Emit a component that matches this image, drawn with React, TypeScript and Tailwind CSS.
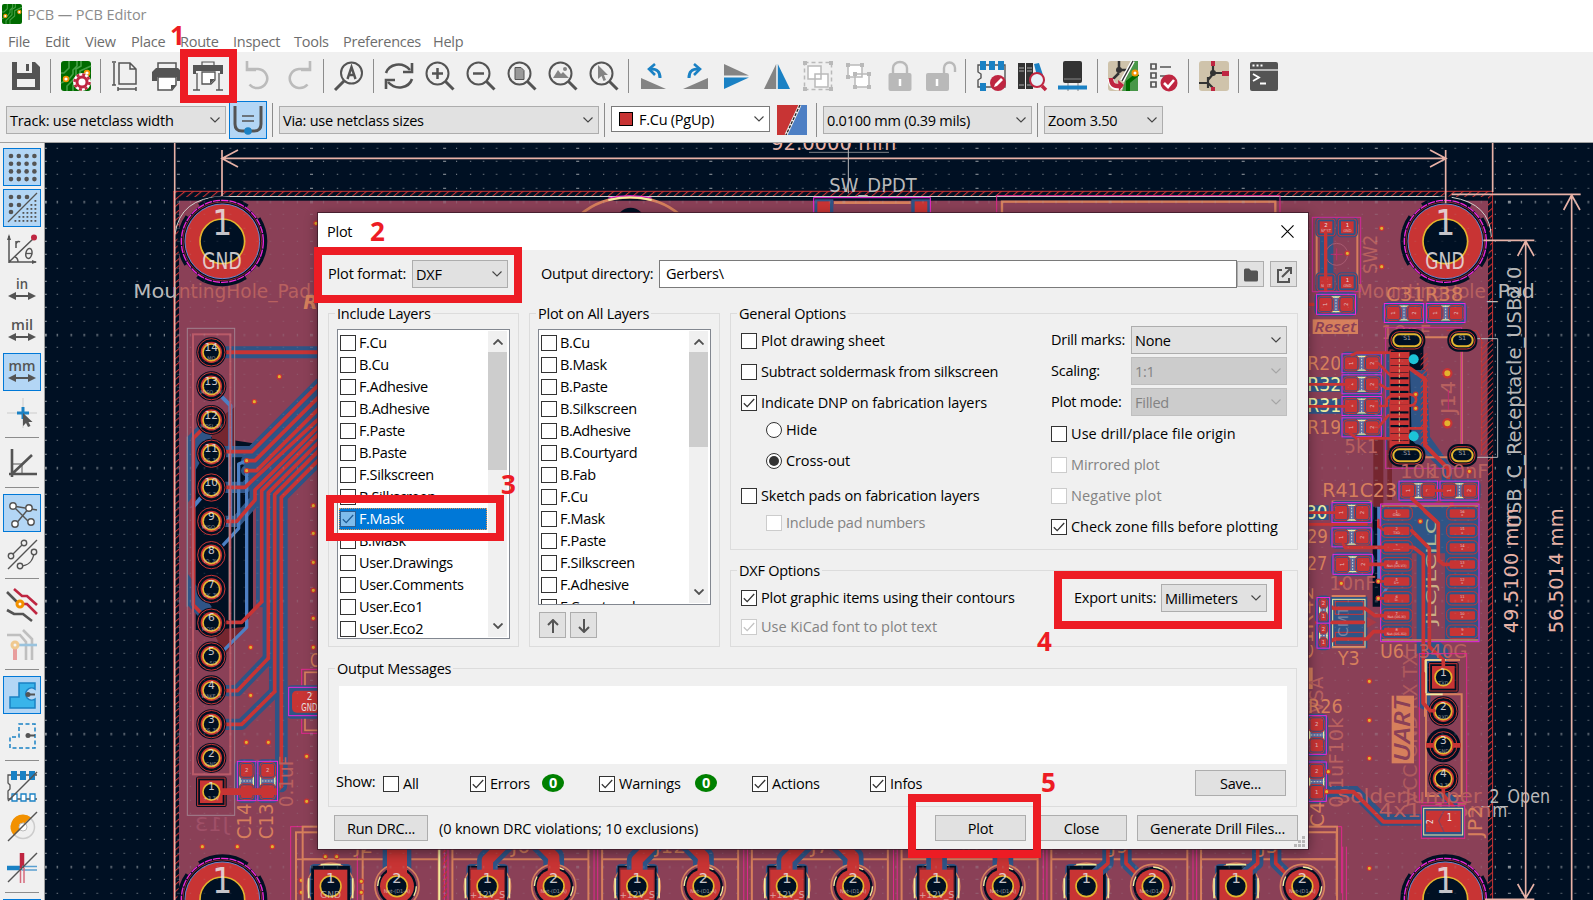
import React from "react";

type P = { children?: React.ReactNode };
const G = "#545454";

/* ---------- toolbar icons, drawn on a 30x30 grid ---------- */
function Ico({ children, className = "h-[30px] w-[30px]" }: P & { className?: string }) {
  return (
    <svg viewBox="0 0 30 30" className={`overflow-visible ${className}`} fill="none" stroke={G} strokeWidth="2">
      {children}
    </svg>
  );
}
const BoardTile = () => (
  <g stroke="none">
    <rect width="30" height="30" rx="3" fill="#006b00" />
    <g stroke="#45a045" strokeWidth="1.600" fill="none">
      <path d="M0 12h3l5-5V0M0 22l8-4 4-5V9l4-4V0M6 30v-5l9-9V8l5-3V0M12 30v-6l7-6 0-8 11-5" />
    </g>
    <circle cx="5" cy="18" r="2.400" fill="#fff" stroke="#f29100" strokeWidth="1.600" />
    <circle cx="26" cy="12" r="2.400" fill="#fff" stroke="#f29100" strokeWidth="1.600" />
  </g>
);
const Lens = ({ children }: P) => (
  <Ico>
    <circle cx="12.500" cy="12.500" r="11" strokeWidth="2" />
    <path d="M20.500 20.500L28.500 28.500" strokeWidth="3" />
    {children}
  </Ico>
);
const SaveI = () => (
  <Ico>
    <path d="M1 1h23l5 5v23H1z" fill={G} stroke="none" />
    <path d="M6 1h15v11H6zM6 18h18v8H6z" fill="#f0f0f0" stroke="none" />
    <path d="M15 3h3v7h-3z" fill={G} stroke="none" />
  </Ico>
);
const SetupI = () => (
  <Ico>
    <BoardTile />
    <g stroke="#fff" strokeWidth="8"><circle cx="21" cy="21" r="5" /></g>
    <g stroke="#bf2641"><circle cx="21" cy="21" r="5" fill="#fff" strokeWidth="3" /><circle cx="21" cy="21" r="7.500" strokeWidth="2.500" strokeDasharray="3 2.890" /></g>
  </Ico>
);
const PageI = () => (
  <Ico>
    <path d="M8 2h11l6 6v15H8zM19 2v6h6M1 1h4M1 24h4M3 2v22M7 26v4M25 26v4M7 28h18" strokeWidth="1.500" />
  </Ico>
);
const PrintI = () => (
  <Ico>
    <path d="M6 8V2h18v6" strokeWidth="1.500" />
    <path d="M4 7h22l4 4v9h-5v-4H5v4H0v-9z" fill={G} stroke="none" />
    <path d="M6 16h18v8l-4 5H6z" fill="#fff" strokeWidth="1.500" /><path d="M19 29v-5h5z" fill={G} stroke="none" />
  </Ico>
);
const PlotI = () => (
  <Ico>
    <path d="M9 5V1h12v4" strokeWidth="1.200" />
    <path d="M0 4h30v9h-3v-3H3v3H0z" fill={G} stroke="none" />
    <path d="M4 12v17M26 12v17M0 29h7M23 29h7" strokeWidth="1.300" />
    <path d="M9 11h13v8l-4 4H9z" fill="#fff" strokeWidth="1.300" /><path d="M17 23v-5h5z" fill={G} stroke="none" />
  </Ico>
);
const UndoI = ({ flip = false }: { flip?: boolean }) => (
  <Ico>
    <g transform={flip ? "translate(30 0) scale(-1 1)" : undefined} stroke="#bbb">
      <path d="M5 8h10a10 9.500 0 1 1-8.500 15.500" strokeWidth="2.600" />
      <path d="M4 0v9h9" strokeWidth="2.600" />
    </g>
  </Ico>
);
const FindI = () => (
  <Ico>
    <g transform="translate(30 0) scale(-1 1)">
      <circle cx="12.500" cy="12" r="10.500" />
      <path d="M20 20l9 9" strokeWidth="3" />
    </g>
    <path d="M13.500 18l4-12 4 12M15 14h5" strokeWidth="2.400" />
  </Ico>
);
const RefreshI = () => (
  <Ico>
    <path d="M2 12C5 3 18 0 26 9M28 18C25 27 12 30 4 21" strokeWidth="2.600" />
    <path d="M28 2v9h-9M2 28v-9h9" strokeWidth="2.600" />
  </Ico>
);
const RotI = ({ flip = false }: { flip?: boolean }) => (
  <Ico>
    <g transform={flip ? "translate(30 0) scale(-1 1)" : undefined} stroke="none">
      <path d="M2 17l25 11H2z" fill="#848484" />
      <path d="M21 17C21 10 18 8 12 8" stroke="#1a81c4" strokeWidth="3" />
      <path d="M16 3l-6 5 6 6" stroke="#1a81c4" strokeWidth="2.600" />
    </g>
  </Ico>
);
const FlipV = () => (
  <Ico><path d="M3 3v11.500h25z" fill="#848484" stroke="none" /><path d="M3 28V16.500h25z" fill="#1a81c4" stroke="none" /></Ico>
);
const FlipH = () => (
  <Ico><path d="M2 28h12.200V3z" fill="#848484" stroke="none" /><path d="M28 28H15.800V3z" fill="#1a81c4" stroke="none" /></Ico>
);
const GroupI = () => (
  <Ico>
    <g stroke="#b9b9b9" fill="#fff" strokeWidth="1.500">
      <rect x="1.500" y="1.500" width="27" height="27" strokeDasharray="4 3" fill="none" />
      <path d="M5 5h13v13H5zM12 13h13v13H12z" />
      <path d="M0 0h4v4H0zM26 0h4v4h-4zM0 26h4v4H0zM26 26h4v4h-4z" fill="#b9b9b9" stroke="none" />
    </g>
  </Ico>
);
const UngroupI = () => (
  <Ico>
    <g stroke="#b9b9b9" fill="#fff" strokeWidth="1.500">
      <path d="M4 4h14v12H4zM11 13h14v13H11z" />
      <path d="M2 2h4v4H2zM16 2h4v4h-4zM2 14h4v4H2zM9 11h4v4H9zM23 11h4v4h-4zM9 24h4v4H9zM23 24h4v4h-4z" fill="#b9b9b9" stroke="none" />
    </g>
  </Ico>
);
const LockI = ({ open = false }: { open?: boolean }) => (
  <Ico>
    <path d={open ? "M18 14V7a5.500 5.500 0 0 1 11 0v4" : "M8 14V7a7 6 0 0 1 14 0v7"} stroke="#b9b9b9" strokeWidth="2.400" />
    <rect x={open ? 0 : 3.500} y="12" width="23" height="18" rx="2" fill="#b9b9b9" stroke="none" />
    <path d={open ? "M11 18v7" : "M15 18v7"} stroke="#fff" strokeWidth="2.500" />
  </Ico>
);
const FootEditI = () => (
  <Ico>
    <path d="M2 4h27v22H2V19l3-2v-4l-3-2z" strokeWidth="1.400" />
    <path d="M4 0h6v9H4zM13 0h6v9h-6zM22 0h6v9h-6zM4 22h6v8H4z" fill="#1a81c4" stroke="none" />
    <circle cx="22" cy="22" r="8" fill="#bf2641" stroke="none" />
    <path d="M18 26l1-3 6-6 2 2-6 6z" fill="#fff" stroke="none" />
  </Ico>
);
const LibI = () => (
  <Ico>
    <path d="M1 2h7v26H1zM9 2h7v26H9z" fill="#333" stroke="none" />
    <path d="M2 7h5M10 7h5M2 10h5M10 10h5M2 24h5M10 24h5" stroke="#aaa" strokeWidth="1" />
    <path d="M17 3l5-1 6 18-6 3z" fill="#1a81c4" stroke="none" />
    <circle cx="20" cy="19" r="7" fill="#e6f1f8" stroke="#bf2641" strokeWidth="2" />
    <path d="M25 25l4 4" stroke="#bf2641" strokeWidth="3.500" />
  </Ico>
);
const ChipI = () => (
  <Ico>
    <path d="M10 18v12M20 18v12" stroke="#aaa" strokeWidth="1.500" />
    <rect x="5" y="0" width="19" height="22" rx="2" fill="#333" stroke="none" />
    <path d="M6 18h17" stroke="#888" strokeWidth="1" />
    <path d="M0 26.500h29" stroke="#1a81c4" strokeWidth="4" />
  </Ico>
);
const SyncI = () => (
  <Ico>
    <rect width="30" height="30" rx="3" fill="#cfc3ab" stroke="none" />
    <path d="M23 0h7v30H14z" fill="#489648" stroke="none" />
    <path d="M20 30v-9l10-8" stroke="#006b00" strokeWidth="4" />
    <path d="M11 0v9M11 9h8M11 12l-6 6v6" stroke="#333" strokeWidth="2.500" />
    <circle cx="11" cy="9" r="3" fill="#333" stroke="none" />
    <path d="M25 0L14 20" stroke="#fff" strokeWidth="4" /><path d="M25 0L14 20" stroke="#333" strokeWidth="1.400" />
    <circle cx="27" cy="12" r="2.500" fill="#fff" stroke="#f29100" />
    <path d="M3 18c0 8 6 9 10 7" stroke="#fff" strokeWidth="6.500" /><path d="M3 17c0 8 5 9 10 7.500" stroke="#bf2641" strokeWidth="4.500" /><path d="M10 19l6 5-5 6z" fill="#bf2641" stroke="none" />
  </Ico>
);
const DrcI = () => (
  <Ico>
    <path d="M2 3h5v5H2zM2 12h5v5H2zM2 21h5v5H2zM11 6h11M11 15h6" strokeWidth="1.700" />
    <circle cx="20" cy="22" r="8.500" fill="#bf2641" stroke="none" />
    <path d="M15 22l4 4 6-7" stroke="#fff" strokeWidth="2.600" />
  </Ico>
);
const SchI = () => (
  <Ico>
    <rect width="30" height="30" rx="3" fill="#cfc3ab" stroke="none" />
    <path d="M0 22h9M9 16v11M14 5v8l-5 6M9 22l5 5M14 12h9" stroke="#333" strokeWidth="2.200" />
    <circle cx="14" cy="12" r="3" fill="#333" stroke="none" />
    <path d="M12 0h4v5h-4zM23 10h7v5h-7zM12 26h4v4h-4z" fill="#bf2641" stroke="none" />
  </Ico>
);
const TermI = () => (
  <Ico>
    <rect x="1" y="1" width="28" height="29" rx="2" fill={G} stroke="none" />
    <path d="M1 9h28" stroke="#f0f0f0" strokeWidth="1.300" />
    <path d="M3.500 4.500h2M7.500 4.500h2M11.500 4.500h2" stroke="#fff" strokeWidth="2" />
    <path d="M4 13l6 3.500L4 20M11 22.500h6" stroke="#fff" strokeWidth="1.800" />
  </Ico>
);
const PlusI = () => <Lens><path d="M7 12.500h11M12.500 7v11" strokeWidth="2.500" /></Lens>;
const MinusI = () => <Lens><path d="M7 12.500h11" strokeWidth="2.500" /></Lens>;
const FitI = () => <Lens><path d="M8 6.500h6l3 3v9H8z" fill="#999" stroke={G} strokeWidth="1" /></Lens>;
const ImgI = () => <Lens><path d="M5 17l5-8 3 4 2-2 6 6z" fill="#848484" stroke="none" /><circle cx="17" cy="8" r="2" fill="#848484" stroke="none" /></Lens>;
const SelI = () => <Lens><path d="M9 4v14l3.500-3 2 5 2.500-1-2-5h4z" fill="#848484" stroke="none" /></Lens>;

const TOP: (React.FC | null)[] = [
  SaveI, null, SetupI, null, PageI, PrintI, PlotI, null, () => <UndoI />, () => <UndoI flip />, null, FindI, null,
  RefreshI, PlusI, MinusI, FitI, ImgI, SelI, null, () => <RotI />, () => <RotI flip />, FlipV, FlipH, GroupI, UngroupI,
  () => <LockI />, () => <LockI open />, null, FootEditI, LibI, ChipI, null, SyncI, DrcI, null, SchI, null, TermI,
];

/* ---------- left toolbar icons ---------- */
const range = (n: number) => Array.from({ length: n }, (_, i) => i);
const DotsI = () => (
  <Ico>{range(4).flatMap((r) => range(4).map((c) => <circle key={`${r}${c}`} cx={4 + c * 7.800} cy={4 + r * 7.700} r="2.300" fill={G} stroke="none" />))}</Ico>
);
const DotsHalfI = () => (
  <Ico>
    <g fill={G} stroke="none">
      {[[4, 4], [12, 4], [20, 4], [4, 12], [12, 12], [4, 19]].map(([x, y]) => <circle key={`${x}-${y}`} cx={x} cy={y} r="2.300" />)}
      {range(6).flatMap((r) => range(r + 1).map((c) => <rect key={`${r}_${c}`} x={27.500 - c * 4} y={7 + r * 4} width="1.800" height="1.800" />))}
    </g>
    <path d="M1 29L30 0" strokeWidth="1.200" />
  </Ico>
);
const PolarI = () => (
  <Ico>
    <path d="M2 29V2M2 28h27M2 28L27 4" strokeWidth="1.500" /><path d="M0 6l2-6 2 6M25 26l5 2-5 2" fill={G} stroke="none" />
    <circle cx="27" cy="3.500" r="3" fill="#bf2641" stroke="none" />
    <path d="M9 14V7M9 10c1-3 3-3 4-2M8 23c3 1 3 3 3 5" strokeWidth="1.500" />
    <ellipse cx="22" cy="19.500" rx="3" ry="5" transform="rotate(12 22 19)" strokeWidth="1.500" /><path d="M19 19.500h6" strokeWidth="1.300" />
  </Ico>
);
const UnitI = ({ t, w }: { t: string; w: number }) => (
  <Ico>
    <text x="15" y="14" textAnchor="middle" textLength={w} lengthAdjust="spacingAndGlyphs" fill={G} stroke="none" className="[font-family:'Open_Sans',sans-serif] text-[15px] font-semibold tracking-normal">{t}</text>
    <path d="M5 21h20" strokeWidth="2" /><path d="M1 21l8-4v8zM29 21l-8-4v8z" fill={G} stroke="none" />
  </Ico>
);
const CursI = () => (
  <Ico><path d="M16 0v30M0 15h30" stroke="#ccc" strokeWidth="1" /><path d="M16 9v12M10 15h12" stroke="#1a81c4" strokeWidth="3" /><path d="M16 15v13l3-3 2 4 2.500-1-2-4h4z" fill={G} stroke="none" /></Ico>
);
const AngI = () => <Ico><path d="M5 1v28M2 26h28M5 26L25 7" strokeWidth="2.600" /><path d="M5 16h10v10" strokeWidth="1" /></Ico>;
const RatsI = () => (
  <Ico><path d="M6 8l24 4M6 8l18 18M8 27L22 10" strokeWidth="1.400" />{[[6, 8], [22, 10], [8, 26], [24, 24]].map(([x, y]) => <circle key={x} cx={x} cy={y} r="3.200" fill="#fff" strokeWidth="1.400" />)}</Ico>
);
const CurvI = () => (
  <Ico><path d="M1 30L30 1M4 17L17 4M13 27c8 0 13-5 14-13" strokeWidth="1.400" />{[[17, 4], [4, 17], [27, 13], [13, 27]].map(([x, y]) => <circle key={x} cx={x} cy={y} r="2.700" fill="#f0f0f0" strokeWidth="1.400" />)}</Ico>
);
const NetI = () => (
  <Ico><g strokeWidth="2.600"><path d="M0 3l12 12M0 21l7 4h9l9 7" /><path d="M7 0l8 7h5l10 9M14 15h6l10 10" stroke="#bf2641" /></g><circle cx="13" cy="15" r="3" fill="#fff" stroke="#f29100" strokeWidth="3" /></Ico>
);
const NetDimI = () => (
  <Ico><g strokeWidth="2.600" opacity=".4"><path d="M0 5h13l6 7v18M16 0l9 9v21" stroke="#777" /><path d="M12 15h18" stroke="#1a81c4" /><path d="M8 16v14" stroke="#d22" strokeWidth="4" /><circle cx="8" cy="15" r="3" fill="#fff" stroke="#f29100" strokeWidth="3" /></g></Ico>
);
const ZoneI = () => (
  <Ico><path d="M12 3h16v6a6 6 0 1 0 0 10v9H3V17h9z" fill="#39b4ea" stroke="#1a81c4" strokeWidth="1.500" /><path d="M20 14.500h8" strokeWidth="2" /><circle cx="21" cy="14.500" r="2.500" fill={G} stroke="none" /></Ico>
);
const ZoneOI = () => (
  <Ico><path d="M12 3h16v24H3V16h9z" stroke="#1a81c4" strokeWidth="1.500" strokeDasharray="4 2.500" /><path d="M20 14.500h8" strokeWidth="2" /><circle cx="21" cy="14.500" r="2.500" fill={G} stroke="none" /></Ico>
);
const FpI = () => (
  <Ico><path d="M30 4H1v8l2 2v4l-2 2v8h29" strokeWidth="1.300" /><path d="M4 0h6v9H4zM13 0h6v9h-6zM22 0h6v9h-6z" fill="#1a81c4" stroke="none" /><path d="M5 23h5v7H5zM14 23h5v7h-5zM23 23h5v7h-5z" stroke="#1a81c4" fill="#fff" strokeWidth="1.300" /><path d="M1 30L30 1" strokeWidth="1.400" /></Ico>
);
const ViaI = () => (
  <Ico><circle cx="16" cy="15" r="11.500" stroke="#ccc" strokeWidth="1.500" /><path d="M16 2.500a12.500 12.500 0 0 0-9 21L13 18a4.500 4.500 0 0 1 5-7l6-5.500A12.500 12.500 0 0 0 16 2.500z" fill="#f29100" stroke="none" /><circle cx="16" cy="15" r="4" fill="#fff" stroke="#bbb" strokeWidth="1" /><path d="M1 29L30 0" strokeWidth="1.400" /></Ico>
);
const TrkI = () => (
  <Ico><path d="M0 15h15" stroke="#1a81c4" strokeWidth="4.500" /><path d="M15 0v15" stroke="#bf2641" strokeWidth="4.500" /><path d="M15 13.500h15M15 17h15" stroke="#5a9fd0" strokeWidth="1.500" /><path d="M13.500 15v15M17 15v15" stroke="#d56a7c" strokeWidth="1.500" /><path d="M1 29L30 0" strokeWidth="1.400" /></Ico>
);
const LEFT: ([React.FC, boolean] | null)[] = [
  [DotsI, true], [DotsHalfI, true], [PolarI, false], [() => <UnitI t="in" w={12} />, false], [() => <UnitI t="mil" w={22} />, false],
  [() => <UnitI t="mm" w={27} />, true], [CursI, false], null, [AngI, false], null, [RatsI, true], [CurvI, false], null,
  [NetI, false], [NetDimI, false], null, [ZoneI, true], [ZoneOI, false], null, [FpI, false], [ViaI, false], [TrkI, false], null, [DotsI, true],
];

/* ---------- board drawing ---------- */
const BG = "#001023", ZN = "#8a4057", RD = "#c83434", BL = "#2f5486", B2 = "#4d7fc4", MG = "#f026d8", OR = "#d67f5c", DM = "#e8b2a7", YL = "#e3b42e", PY = "#f0eda0", FT = "#b8605f", WH = "#e8e4e6";

function Tx({ x, y, w, s = 60, c = OR, r = 0, a = 1, m = false, children }: { x: number; y: number; w: number; s?: number; c?: string; r?: number; a?: number; m?: boolean; children: string }) {
  return (
    <text transform={`translate(${x} ${y}) rotate(${r})${m ? " scale(-1 1)" : ""}`} textLength={w} lengthAdjust="spacingAndGlyphs" fontSize={s} fill={c} opacity={a}>
      {children}
    </text>
  );
}
const Ln = ({ d, c = RD, w = 10 }: { d: string; c?: string; w?: number }) => <path d={d} stroke={c} strokeWidth={w} fill="none" strokeLinejoin="round" strokeLinecap="round" />;
const Box = ({ x, y, w, h, c = MG, s = 3 }: { x: number; y: number; w: number; h: number; c?: string; s?: number }) => <rect x={x} y={y} width={w} height={h} stroke={c} strokeWidth={s} fill="none" />;
const Via = ({ x, y, b = 1 }: { x: number; y: number; b?: number }) => <circle cx={x} cy={y} r={6.500 * b} fill={YL} stroke={RD} strokeWidth={3.500 * b} />;
function Pin({ x, y, n, t = "", sq = false }: { x: number; y: number; n: string; t?: string; sq?: boolean }) {
  return (
    <g>
      {sq ? (
        <>
          <rect x={x - 46} y={y - 46} width="92" height="92" rx="8" fill={BG} />
          <rect x={x - 41} y={y - 41} width="82" height="82" fill="none" stroke={RD} strokeWidth="3" />
          <rect x={x - 34} y={y - 34} width="68" height="68" fill={RD} />
        </>
      ) : (
        <>
          <circle cx={x} cy={y} r="45" fill={BG} />
          <circle cx={x} cy={y} r="41" fill="none" stroke={RD} strokeWidth="3" />
          <circle cx={x} cy={y} r="32" fill={RD} />
        </>
      )}
      <circle cx={x} cy={y} r="25" fill={BG} stroke={YL} strokeWidth="5" />
      <text x={x} y={y - 4} textAnchor="middle" fontSize="32" fill={WH} opacity=".85">{n}</text>
      <text x={x} y={y + 24} textAnchor="middle" fontSize="15" fill={WH} opacity=".55">{t}</text>
    </g>
  );
}
function Hole({ x, y }: { x: number; y: number }) {
  return (
    <g>
      <circle cx={x} cy={y} r="130" fill="none" stroke={BG} strokeWidth="10" strokeDasharray="155 49.200" strokeDashoffset="75" />
      <circle cx={x} cy={y} r="126" fill={BG} />
      <circle cx={x} cy={y} r="123" fill="none" stroke={MG} strokeWidth="4" strokeDasharray="22 3" />
      <circle cx={x} cy={y} r="118" fill="none" stroke={RD} strokeWidth="2" />
      <circle cx={x} cy={y} r="112" fill={RD} stroke="#6b86cc" strokeWidth="3" />
      <circle cx={x} cy={y} r="67" fill={BG} stroke={YL} strokeWidth="5" />
      <Tx x={x - 30} y={y - 20} w={60} s={104} c={WH} a={0.85}>1</Tx>
      {y < 2000 && <Tx x={x - 60} y={y + 84} w={118} s={68} c={WH} a={0.85}>GND</Tx>}
    </g>
  );
}
/* two-pad chip part; v draws it upright */
function Chip({ x, y, w = 118, h = 57, v = false, a = "1", b = "2" }: { x: number; y: number; w?: number; h?: number; v?: boolean; a?: string; b?: string }) {
  const L = v ? h : w, S = v ? w : h;
  return (
    <g transform={`translate(${x} ${y})${v ? " rotate(90)" : ""}`}>
      <rect x={-L / 2 - 6} y={-S / 2 - 6} width={L + 12} height={S + 12} rx="18" fill={BL} />
      <rect x="-8" y={-S / 2 + 8} width="16" height={S - 16} fill="#5b6ba0" />
      <path d={`M-14 ${-S / 2 + 8}h28M-14 ${S / 2 - 8}h28`} stroke={PY} strokeWidth="4" />
      <path d={`M0 ${-S / 2 + 6}v${S - 12}`} stroke="#dcdcc8" strokeWidth="3" strokeDasharray="5 4" />
      {[-1, 1].map((k) => (
        <g key={k}>
          <rect x={k * L * 0.27 - L * 0.2} y={-S / 2 + 6} width={L * 0.4} height={S - 12} rx="12" fill={BL} stroke={RD} strokeWidth="3" />
          <rect x={k * L * 0.27 - L * 0.16} y={-S / 2 + 10} width={L * 0.32} height={S - 20} rx="6" fill={RD} />
        </g>
      ))}
      <text x={-L * 0.27} y="5" textAnchor="middle" fontSize="16" fill={WH} opacity=".75" transform={`rotate(-90 ${-L * 0.27} 0)`}>{v ? b : a}</text>
      <text x={L * 0.27} y="5" textAnchor="middle" fontSize="16" fill={WH} opacity=".75" transform={`rotate(-90 ${L * 0.27} 0)`}>{v ? a : b}</text>
      <Box x={-L / 2} y={-S / 2} w={L} h={S} />
    </g>
  );
}
const Slot = ({ x, y, w }: { x: number; y: number; w: number }) => (
  <g>
    <rect x={x - w / 2 - 14} y={y - 34} width={w + 28} height="68" rx="32" fill={BG} />
    <rect x={x - w / 2 - 7} y={y - 26} width={w + 14} height="52" rx="25" fill="none" stroke={RD} strokeWidth="3" />
    <rect x={x - w / 2} y={y - 18} width={w} height="36" rx="18" fill={BG} stroke={YL} strokeWidth="6" />
    <text x={x} y={y - 1} textAnchor="middle" fontSize="18" fill={WH} opacity=".7">S1</text>
  </g>
);

const pinNames = ["MO", "MISO_3V", "MOSI_3V", "CS_3V", "CK_3V", "MISO_5", "IO_3V", "CK_3V", "MOSI_3", "+5/3", "WAKE_5", "CS_3V", "GND", "+3.3V"];

function LeftBoard() {
  const diag = [
    "M665 935H755L960 730", "M740 962H765L960 767", "M740 992H770L960 802", "M665 1042H735L960 833",
    "M660 1144H710L765 1080V1050L960 855", "M785 1385V1052L960 877", "M805 1555V1058L960 903", "M824 1655V1064L960 928", "M844 1940V1072L960 956",
  ];
  return (
    <g transform="translate(0 140) scale(.33333)">
      <path d="M587 910l47-20 125 20v500l-30 60H587z" fill={BG} />
      <path d="M636 850l70-50v120h-70zM640 1470l100-10-70 90z" fill="#75262f" />
      <path d="M562 890l50-50 25 60-50 90v70l-25 30zM562 1300l73 100-20 50-53-55z" fill={BL} />
      <path d="M665 637H960" stroke={BL} strokeWidth="36" />
      <Ln d="M665 637H960" w={12} />
      {diag.map((d) => <Ln key={d} d={d} c={BL} w={34} />)}
      <Ln d="M844 1072V1930" c={BL} w={38} />
      <Ln d="M725 1753L824 1655M712 1652L805 1555M665 1652H712M665 1753H725" c={BL} w={34} />
      <Ln d="M655 760l36 36v340l-30 24M580 1100l50-60" c={B2} w={12} />
      <Ln d="M716 1110V972l24-10M716 1110v55l-56 60M740 992v470l-75 75" c={B2} w={10} />
      <path d="M562 890V1400M703 930V1465" stroke="#35d0e8" strokeWidth="3" />
      <path d="M688 930V1440" stroke={DM} strokeWidth="4" />
      {diag.map((d) => <Ln key={d} d={d} w={11} />)}
      <Ln d="M634 840L580 895V1395L634 1450M785 1385L725 1447H665M805 1555L712 1652H665M824 1655L725 1753H665" w={11} />
      <Ln d="M844 1932L830 1955H665" w={14} />
      <Box x={562} y={565} w={142} h={1461} c="#a1808f" />
      <Box x={579} y={583} w={112} h={1320} c="#b95a68" s={6} />
      {pinNames.map((t, i) => <Pin key={i} x={634} y={637 + i * 101.400} n={String(14 - i)} t={t} sq={i === 13} />)}
      <Tx x={400} y={474} w={133} c="#b9b9b9">Mou</Tx>
      <Tx x={536} y={474} w={397} c={FT}>ntingHole_Pad</Tx>
      <text x="910" y="508" fontSize="56" fontStyle="italic" fontWeight="700" fill={OR}>R</text>
      <Chip x={740} y={1923} w={56} h={118} v />
      <Chip x={803} y={1923} w={59} h={118} v />
      <path d="M665 1955h165" stroke={RD} strokeWidth="20" />
      <Tx x={754} y={2098} w={108} r={-90}>C14</Tx>
      <Tx x={820} y={2098} w={108} r={-90}>C13</Tx>
      <Tx x={880} y={2002} w={155} r={-90} c={FT}>0.1uF</Tx>
      <Tx x={686} y={2072} w={102} c="#a05068" m>J13</Tx>
      <Box x={905} y={1588} w={80} h={192} c="#e0288f" />
      <Box x={915} y={1597} w={80} h={174} c={OR} s={5} />
      <rect x="862" y="1636" width="100" height="100" rx="12" fill={BL} />
      <Box x={866} y={1642} w={100} h={85} />
      <rect x="876" y="1652" width="90" height="66" rx="14" fill={RD} />
      <Tx x={920} y={1679} w={17} s={30} c={WH}>2</Tx><Tx x={904} y={1713} w={48} s={30} c={WH}>GND</Tx>
      <Tx x={930} y={1582} w={30} c={OR}>C</Tx>
      <Box x={872} y={2060} w={200} h={300} c="#e0288f" />
      <Box x={888} y={2077} w={200} h={300} s={6} c={OR} /><path d="M888 2158h80" stroke={OR} strokeWidth="5" />
      {[[948, 250], [838, 710], [763, 785], [740, 962], [740, 992], [940, 1097], [940, 1180], [940, 1267], [940, 1351], [940, 1435], [940, 1522], [752, 1522], [752, 1666], [739, 1807], [805, 1807], [920, 1849], [920, 1984], [607, 2120], [712, 2120], [817, 2120], [904, 2221], [904, 2257]].map(([x, y]) => <Via key={`${x}-${y}`} x={x} y={y} />)}
      <Hole x={667} y={304} />
      <Hole x={667} y={2278} />
    </g>
  );
}

function RightBoard() {
  return (
    <g transform="translate(1300 140) scale(.33333)">
      {/* copper keep-outs and blue fills */}
      <path d="M265 620h105v300H265z" fill={BG} />
      <path d="M255 640h15v290h-15zM330 690h50l10 200 65 90v90h-30v-80l-90-90z" fill={BL} />
      <path d="M220 870h30v230h-30zM262 900h14v180h-14z" fill="#75262f" />
      <rect x="60" y="250" width="40" height="190" fill={BL} />
      <path d="M240 1095h300v410H240z" fill={BL} />
      <path d="M345 1490l40-20 60 60v50h-60zM355 1530h40l-5 190-35-20z" fill={BL} />
      <path d="M335 1240h100v260H335z" fill={ZN} />
      <path d="M218 1100h24v300h-24z" fill={BG} /><path d="M236 1100v220M262 1340l-16 30" stroke={B2} strokeWidth="9" />
      <path d="M75 1955h90l85 85h130" stroke={BL} strokeWidth="34" fill="none" />
      <path d="M370 1200v340" stroke={BL} strokeWidth="40" fill="none" />
      {/* reset switch */}
      <Box x={50} y={256} w={122} h={176} c={OR} s={6} />
      {[[78, 262, "2"], [142, 262, "1"], [78, 427, "2"], [142, 427, "1"]].map(([x, y, n]) => (
        <g key={`${x}${y}`}>
          <rect x={+x - 32} y={+y - 30} width="64" height="60" rx="14" fill={BL} />
          <rect x={+x - 27} y={+y - 25} width="54" height="50" rx="8" fill="none" stroke={RD} strokeWidth="3" />
          <rect x={+x - 19} y={+y - 18} width="38" height="36" fill={RD} />
          <text x={x} y={+y - 2} fontSize="16" textAnchor="middle" fill={WH}>{n}</text>
          <text x={x} y={+y + 14} fontSize="11" textAnchor="middle" fill={WH} opacity=".7">{n === "1" ? "GND" : "NRST"}</text>
        </g>
      ))}
      <circle cx="110" cy="343" r="33" stroke="#a85a70" strokeWidth="3" fill="none" />
      <path d="M92 343h36M110 325v36" stroke="#c02a70" strokeWidth="3" />
      <Ln d="M77 275V470L60 493H20" w={10} />
      <Box x={37} y={232} w={145} h={223} c="#d02a9a" />
      <Tx x={230} y={402} w={118} r={-90} c={FT}>SW2</Tx>
      <Chip x={108} y={493} w={117} h={60} />
      <rect x="38" y="538" width="136" height="44" fill={OR} />
      <text x="43" y="576" fontSize="42" fontStyle="italic" fontWeight="600" fill={ZN} textLength="126" lengthAdjust="spacingAndGlyphs" className="[font-family:'Open_Sans',sans-serif]">Reset</text>
      <Tx x={170} y={474} w={388} c={FT}>MountingHole</Tx>
      <Tx x={562} y={474} w={142} c="#b9b9b9">_Pad</Tx>
      <Tx x={258} y={482} w={232}>C31R38</Tx>
      <Tx x={243} y={598} w={150} c={FT}>10nF</Tx>
      <Chip x={312} y={519} /><Chip x={437} y={519} w={116} />
      {/* usb receptacle */}
      <path d="M365 592h120M365 952h120" stroke={OR} strokeWidth="6" /><path d="M485 630v290" stroke={OR} strokeWidth="7" />
      <path d="M480 596h113v356H480" stroke="#b9b9b9" strokeWidth="3" fill="none" />
      <path d="M563 605h16v340h-16z" fill={BG} />
      <path d="M545 605h34v340h-34z" fill="url(#hatch)" /><path d="M362 640h22v280h-22z" fill="url(#hatch)" />
      <path d="M545 600v345M440 572h90l15 30" stroke={RD} strokeWidth="3" fill="none" />
      <Box x={257} y={563} w={228} h={422} c="#d02a9a" />
      {range(14).map((i) => <rect key={i} x="270" y={636 + i * 20.500} width="57" height={i < 3 || i > 10 ? 19 : 14} fill={RD} />)}
      <Box x={270} y={630} w={57} h={292} c={RD} />
      <path d="M298 640v280" stroke={PY} strokeWidth="3" strokeDasharray="10 6" opacity=".7" />
      <Slot x={321} y={601} w={82} /><Slot x={487} y={601} w={62} /><Slot x={321} y={946} w={82} /><Slot x={487} y={946} w={62} />
      <Tx x={466} y={822} w={100} r={-90} c={FT}>J14</Tx>
      <path d="M445 750v60" stroke="#c02a70" strokeWidth="3" />
      <circle cx="341" cy="658" r="15" fill="#1cc4d8" /><circle cx="341" cy="889" r="15" fill="#1cc4d8" />
      {["R20", "R32", "R31", "R19"].map((t, i) => (
        <g key={t}>
          {(i === 1 || i === 2) && <path d={`M24 ${733 + (i - 1) * 66}h100`} stroke={BL} strokeWidth="44" />}
          <Tx x={22} y={[691, 753, 817, 883][i]} w={102} c={i === 1 || i === 2 ? PY : OR}>{t}</Tx>
          <Chip x={185} y={[670, 733, 798, 862][i]} />
        </g>
      ))}
      <Ln d="M20 733H150M20 799H150M155 645l15-7H270M150 880l20 15h100M235 670l35 35M240 733l20 13h50M240 798h20l0-20q10-15 40-15h30q20 3 18 18t-18 16h-60M235 862l30-36M327 865h45M20 1118h90" w={8} />
      <Ln d="M330 685L375 717V915L445 987V1040L455 1075V1118H480" w={12} />
      <Tx x={133} y={940} w={102} c={FT}>5k1</Tx>
      <Tx x={300} y={1015} w={110} c={FT}>10k</Tx><Tx x={385} y={1015} w={180} c={FT}>100nF</Tx>
      <Tx x={67} y={1070} w={224}>R41C23</Tx>
      <Chip x={355} y={1052} w={116} /><Chip x={478} y={1052} w={116} />
      <Ln d="M385 1052h50" w={8} />
      {/* lower section */}
      <path d="M24 1096h62v44H24z" fill={BL} /><Tx x={18} y={1137} w={64} c={PY}>30</Tx>
      <path d="M95 1084h120" stroke={OR} strokeWidth="5" />
      <Chip x={155} y={1118} h={60} /><Chip x={155} y={1192} /><Chip x={158} y={1273} h={60} />
      <Ln d="M20 1118H110M20 1153H200" w={8} />
      <Tx x={20} y={1210} w={64}>29</Tx><Tx x={20} y={1291} w={62}>27</Tx>
      <Tx x={88} y={1350} w={140} c={FT}>10nF</Tx>
      <Tx x={408} y={1455} w={320} r={-90} c={PY} s={44} a={0.65}>JLCJLCJLC</Tx>
      <path d="M245 1098h290M245 1500h290" stroke={OR} strokeWidth="5" />
      {[1120, 1172, 1222, 1273, 1324, 1375, 1426, 1475].map((y, i) => (
        <g key={y}>
          {[252, 449].map((x) => (
            <g key={x}>
              <rect x={x - 9} y={y - 20} width="94" height="40" rx="14" fill={BL} stroke={RD} strokeWidth="3" />
              <rect x={x} y={y - 12} width="76" height="25" rx="4" fill={RD} />
              <text x={x + 38} y={y - 1} fontSize="11" textAnchor="middle" fill={WH} opacity=".8">{x === 252 ? i + 1 : 16 - i}</text>
              <text x={x + 38} y={y + 9} fontSize="10" textAnchor="middle" fill={WH} opacity=".8">{x === 252 ? ["GND", "TXD", "RXD", "Net-(U6-V3)", "D+", "D-", "Net-(U6-XI)", "Net-(U6-XO)"][i] : "x"}</text>
            </g>
          ))}
        </g>
      ))}
      <Box x={242} y={1092} w={295} h={413} />
      <Ln d="M375 1115L415 1150V1260L430 1273H455M335 1172L388 1225V1520L430 1560V1580M135 1222H340L370 1245V1690L390 1712H410" w={11} />
      <Ln d="M335 1075L410 1145M205 1273h50" w={11} />
      <Ln d="M125 1200l8 20M235 1140v20l20 12M240 1324h20M240 1375h20" w={8} />
      {/* crystal */}
      <rect x="92" y="1370" width="110" height="155" fill={BL} />
      <Box x={98} y={1378} w={97} h={142} c={PY} /><path d="M95 1368h102M95 1522h102" stroke={OR} strokeWidth="6" />
      <rect x="106" y="1385" width="84" height="38" fill="none" stroke={RD} strokeWidth="3" /><rect x="106" y="1477" width="84" height="38" fill="none" stroke={RD} strokeWidth="3" />
      <Tx x={145} y={1490} w={90} r={-90} c="#a8a8b8" s={44} a={0.6}>CMT</Tx>
      <Ln d="M85 1395l15 10h95l30 22h30M50 1447H190M85 1507l20-10h95l20-22h30" w={11} />
      <path d="M200 1430l30 17-30 17z" fill={RD} opacity=".5" />
      <Chip x={70} y={1410} w={38} h={75} v /><Chip x={70} y={1487} w={38} h={75} v />
      <Tx x={40} y={1558} w={220} r={-90} s={50}>C1R42</Tx>
      <Tx x={113} y={1576} w={66}>Y3</Tx><Tx x={240} y={1555} w={72}>U6</Tx>
      <Tx x={313} y={1553} w={190} c={FT}>H340G</Tx>
      <rect x="24" y="1583" width="14" height="64" fill={OR} />
      <Tx x={68} y={1720} w={110} r={-90} c={FT}>VSA</Tx>
      <Tx x={24} y={1718} w={104}>R26</Tx>
      <Chip x={50} y={1785} w={58} h={116} v /><Chip x={50} y={1925} w={58} h={118} v />
      <Tx x={130} y={2003} w={270} r={-90} c={FT}>0.1uF10k</Tx>
      <Tx x={72} y={2062} w={78} r={-90}>C4</Tx>
      {/* uart header */}
      <Tx x={352} y={1990} w={450} r={-90} c={FT} a={0.8}>VCC GND RX TX</Tx>
      <rect x="275" y="1667" width="67" height="203" fill={OR} />
      <text transform="translate(331 1866) rotate(-90)" fontSize="62" fontStyle="italic" fontWeight="600" fill={ZN} textLength="195" lengthAdjust="spacingAndGlyphs" className="[font-family:'Open_Sans',sans-serif]">UART</text>
      <path d="M375 1560h105M378 1663h107v305H378zM375 1560v170" stroke={OR} strokeWidth="6" fill="none" />
      <path d="M378 1660V1560h60M378 1663h50" stroke={PY} strokeWidth="5" fill="none" />
      <Ln d="M430 1960l30 30v50" c={BL} w={30} />
      <Pin x={430} y={1612} n="1" t="TXD" sq /><Pin x={430} y={1714} n="2" t="RXD" />
      <circle cx="430" cy="1816" r="51" fill={BG} /><Pin x={430} y={1816} n="3" t="GND" /><path d="M378 1816h24M458 1816h24" stroke={RD} strokeWidth="14" />
      <Pin x={430} y={1916} n="4" t="+3.3V" />
      <Box x={358} y={1541} w={142} h={447} c="#e0288f" />
      <Ln d="M370 1600V1690L390 1712H402M430 1580V1560M430 1948V1965L460 2000V2030" w={11} />
      <Tx x={110} y={1990} w={435} c={FT}>SolderJumper</Tx><Tx x={545} y={1990} w={205} c="#b9b9b9">_2_Open</Tx>
      <Tx x={235} y={2030} w={340} c={FT}>4x1_1.5m</Tx><Tx x={577} y={2030} w={45} c="#b9b9b9">m</Tx>
      <Ln d="M80 1955H160L250 2045H380" w={12} />
      <rect x="366" y="2000" width="128" height="92" fill={BL} /><rect x="378" y="2012" width="104" height="64" fill={RD} /><Box x={371} y={2005} w={117} h={80} c={PY} />
      <path d="M432 2012l-16 30 16 34" stroke={ZN} strokeWidth="4" fill="none" />
      <Box x={364} y={1997} w={130} h={98} c="#e0288f" />
      <Tx x={440} y={2043} w={16} s={34} c={WH}>1</Tx><Tx x={400} y={2052} w={14} s={28} r={-90} c={WH}>2</Tx>
      <Tx x={545} y={2092} w={95} r={-90}>JP2</Tx>
      {/* board connectors corner */}
      <path d="M0 2060h125v200" stroke="#e0288f" strokeWidth="3" fill="none" />
      <path d="M0 2077h110v190M0 2158h110" stroke={OR} strokeWidth="6" fill="none" />
      {[[245, 265], [142, 340], [245, 380], [347, 763], [347, 805], [508, 994], [361, 1144], [124, 1330], [235, 1324], [235, 1375], [208, 1624], [208, 1741], [208, 1855], [208, 2185], [85, 1895], [80, 1955]].map(([x, y]) => <Via key={`${x}-${y}`} x={x} y={y} />)}
      <Via x={442} y={700} b={1.9} /><Via x={442} y={850} b={1.9} />
      <Hole x={436} y={304} /><Hole x={436} y={2278} />
      <path d="M455 172Q570 190 574 290" stroke="#d0d2cd" strokeWidth="3" fill="none" />
      {/* dimensions */}
      <g stroke={DM} strokeWidth="5" fill="none">
        <path d="M437 30V190M578 0V156M455 163H842M815 163V2400M791 210l24-45 25 45M550 301H703M677 301V2275M653 348l24-45 25 45M653 2232l24 43 25-43M555 2278H703" />
      </g>
      <Tx x={664} y={1165} w={785} r={-90} c="#b9b9b9">USB_C_Receptacle_USB2.0</Tx>
      <Tx x={654} y={1480} w={375} r={-90} c={DM}>49.5100 mm</Tx>
      <Tx x={790} y={1480} w={375} r={-90} c={DM}>56.5014 mm</Tx>
    </g>
  );
}

function BottomRow() {
  return (
    <g transform="translate(310 640) scale(.33333)">
      {range(7).map((i) => {
        const x = i * 449.200;
        const s = i === 0 ? 62 : 83 + x, r = i === 0 ? 261 : 282 + x;
        const lead = i === 4 ? `M${s} 700V600M${r} 700V600` : `M${s} 700V660l60-60M${r} 700V650l-50-50`;
        const thin = `M${s + 30} 700l35-30v-60M${r - 30} 720l-50-50v-60`;
        return (
          <g key={i}>
            <Box x={x - 22} y={560} w={408} h={400} c={OR} s={6} />
            <path d={`M${x - 22} 658h408`} stroke={OR} strokeWidth="6" />
            <path d={`M${x + 403} 620v180M${x + 414} 620v180`} stroke="#e0288f" strokeWidth="3" />
            <rect x={s - 63} y="672" width="126" height="130" rx="14" fill={BL} />
            <circle cx={s} cy="739" r="70" fill="none" stroke={OR} strokeWidth="4" />
            <path d={`M${s - 66} 715v60M${s + 66} 715v60M${s - 30} 674h60`} stroke={PY} strokeWidth="5" />
            <rect x={s - 56} y="680" width="112" height="120" fill={i === 0 || i > 4 ? BG : "#7a2430"} stroke={BG} strokeWidth="5" />
            {i === 0 && <><path d="M261 600v90" stroke={BL} strokeWidth="86" /><path d="M261 600v110" stroke={RD} strokeWidth="60" /></>}
            {i > 0 && i < 5 && <><Ln d={lead} c={BL} w={62} /><Ln d={lead} w={34} /></>}
            {i > 4 && <><Ln d={thin} c={BL} w={34} /><Ln d={thin} w={11} /></>}
            <rect x={s - 50} y="689" width="100" height="110" fill={RD} />
            <circle cx={r} cy="739" r="66" fill={ZN} stroke={OR} strokeWidth="5" />
            <circle cx={r} cy="739" r="58" fill={BG} stroke={PY} strokeWidth="4" strokeDasharray="30 61" />
            <circle cx={r} cy="739" r="51" fill={RD} />
            {i < 5 && <path d={`M${r} 665v35`} stroke={RD} strokeWidth={i === 0 ? 60 : 36} />}
            {[s, r].map((c, k) => (
              <g key={k}>
                <circle cx={c} cy="739" r="31" fill={BG} stroke={YL} strokeWidth="5" />
                <text x={c} y="730" textAnchor="middle" fontSize="44" fill={WH} opacity=".85">{k + 1}</text>
                <text x={c} y={k ? 758 : 775} textAnchor="middle" fontSize={k || i > 4 ? 15 : 27} fill={WH} opacity=".6">{k ? "Net-(D1-A)" : i === 0 ? "GND" : i > 4 ? "" : "+12V_S"}</text>
              </g>
            ))}
            <text x={(s + r) / 2} y="640" textAnchor="middle" fontSize="60" fill={OR}>{["J2", "J6", "J12", "J7", "J8", "J9", "J5"][i]}</text>
          </g>
        );
      })}
      <path d="M388 620v180" stroke={PY} strokeWidth="6" />
      <path d="M398 620h14v180h-14z" fill="url(#hatch)" />
      <Via x={154} y={724} /><Via x={154} y={757} /><Via x={46} y={650} /><Via x={80} y={650} />
    </g>
  );
}

function Board() {
  return (
    <svg viewBox="45 143 1548 757" className="block h-[757px] w-[1548px] bg-[#001023] tracking-normal [font-family:'DejaVu_Sans',sans-serif]">
      <defs>
        <pattern id="grid" x="43.800" y="200.800" width="133.100" height="133" patternUnits="userSpaceOnUse">
          {range(10).flatMap((r) => range(10).map((c) => (
            <rect key={`${r}${c}`} x={Math.round(c * 13.310)} y={Math.round(r * 13.300)} width={c === 0 ? 3 : 1} height={r === 0 ? 2.500 : 1} fill="#a8adb2" />
          )))}
        </pattern>
        <pattern id="hatch" width="12" height="12" patternUnits="userSpaceOnUse" patternTransform="rotate(45)">
          <rect width="3" height="12" fill={RD} />
        </pattern>
        <pattern id="edge" width="5.300" height="5.300" patternUnits="userSpaceOnUse" patternTransform="rotate(50)">
          <rect width="1.100" height="6" fill={RD} />
        </pattern>
      </defs>
      <rect x="179" y="200.700" width="1309" height="700" fill={ZN} />
      <path d="M174.500 191h1318v6h-1318zM174.500 197h4.500v703h-4.500zM1488 197h4.600v703h-4.600z" fill="url(#edge)" />
      <path d="M173.500 191.300H1492.600V900M173.800 191V900" stroke={RD} strokeWidth="1" fill="none" />
      <path d="M222 196.500H1446M175 234Q180 198 222 196.500" stroke="#d0d2cd" strokeWidth="1" fill="none" />
      <path d="M174.700 143V900" stroke={DM} strokeWidth="1.600" />
      <path d="M222 150V205M222 158.300H1445M238 150l-16 8.500 16 8.500M1430 150l16 8.500-16 8.500" stroke={DM} strokeWidth="1.700" fill="none" />
      <LeftBoard />
      <RightBoard />
      <BottomRow />
      <g transform="translate(580 140) scale(.33333)">
        <path d="M0 225Q60 172 150 172T300 225" stroke={OR} strokeWidth="8" fill="none" />
        <path d="M85 180Q150 164 215 180" stroke={PY} strokeWidth="6" fill="none" />
        <path d="M85 174Q150 160 215 174" stroke={MG} strokeWidth="3" fill="none" />
        <circle cx="152" cy="245" r="42" fill={BG} />
        <Tx x={573} y={30} w={376} c={DM}>92.0000 mm</Tx>
        <path d="M687 37h240" stroke="#b9b9b9" strokeWidth="2" /><path d="M805 10v150" stroke="#b9b9b9" strokeWidth="3" />
        <Tx x={748} y={156} w={262} c="#b9b9b9">SW_DPDT</Tx>
        <rect x="704" y="178" width="56" height="60" fill={BL} /><rect x="994" y="178" width="56" height="60" fill={BL} />
        <rect x="712" y="184" width="38" height="40" fill={RD} /><rect x="1004" y="184" width="38" height="40" fill={RD} />
        <path d="M762 188h230" stroke={OR} strokeWidth="8" />
        <Box x={701} y={173} w={350} h={90} /><Box x={1250} y={167} w={850} h={90} c="#e0288f" /><Box x={1266} y={185} w={820} h={90} c={OR} s={7} />
      </g>
      <rect x="45" y="143" width="1548" height="757" fill="url(#grid)" opacity=".3" />
      <path d="M45 143h129v757H45zM174 143h1419v47H174zM1494 190h99v710h-99z" fill="url(#grid)" opacity=".75" />
    </svg>
  );
}

/* ---------- form controls ---------- */
const Chevron = ({ dim = false }: { dim?: boolean }) => (
  <svg viewBox="0 0 10 6" className="h-[6px] w-[10px] shrink-0" fill="none" stroke={dim ? "#a5a5a5" : "#444"} strokeWidth="1.100"><path d="M.5.5L5 5 9.500.5" /></svg>
);
function Combo({ children, className, dim = false }: P & { className: string; dim?: boolean }) {
  return (
    <div className={`flex h-[28px] shrink-0 items-center justify-between border pr-[5px] pl-[3px] ${dim ? "border-[#bfbfbf] bg-[#cccccc] text-[#838383]" : "border-[#adadad] bg-[#e1e1e1]"} ${className}`}>
      <span className="pt-px">{children}</span>
      <Chevron dim={dim} />
    </div>
  );
}
function Check({ children, on = false, dim = false, className = "" }: P & { on?: boolean; dim?: boolean; className?: string }) {
  return (
    <div className={`flex shrink-0 items-center gap-[4px] ${dim ? "text-[#838383]" : ""} ${className}`}>
      <span className={`flex h-4 w-4 shrink-0 items-center justify-center border bg-white ${dim ? "border-[#cccccc]" : "border-[#333]"}`}>
        {on && <svg viewBox="0 0 12 12" className="h-3 w-3" fill="none" stroke={dim ? "#c3c3c3" : "#333"} strokeWidth="1.300"><path d="M.8 6.200l3.400 3.400L11.200 2" /></svg>}
      </span>
      <span>{children}</span>
    </div>
  );
}
const Radio = ({ children, on = false, className }: P & { on?: boolean; className: string }) => (
  <div className={`flex items-center gap-[4px] pl-[25px] ${className}`}>
    <span className="flex h-4 w-4 items-center justify-center rounded-full border border-[#333] bg-white">{on && <span className="h-[10px] w-[10px] rounded-full bg-[#333]" />}</span>
    <span>{children}</span>
  </div>
);
const Btn = ({ children, className }: P & { className: string }) => (
  <button className={`flex h-[26px] shrink-0 items-center justify-center border border-[#adadad] bg-[#e1e1e1] pt-px ${className}`}>{children}</button>
);
const Group = ({ title, children, className }: P & { title: string; className: string }) => (
  <fieldset className={`shrink-0 border border-[#dcdcdc] ${className}`}>
    <legend className="ml-[6px] h-[20px] px-[2px] leading-[22px]">{title}</legend>
    {children}
  </fieldset>
);
function LayerList({ items, selected, className, thumb }: { items: string[]; selected?: string; className: string; thumb: string }) {
  return (
    <div className={`flex w-[173px] justify-between overflow-hidden border border-[#828790] bg-white py-px pr-[2px] pl-px tracking-[-0.36px] ${className}`}>
      <div className="w-[148px] pt-px">
        {items.map((t) => (
          <div key={t} className={`flex h-[22px] items-center ${t === selected ? "bg-[#0078d7] text-white outline-1 -outline-offset-1 outline-dotted outline-[#e8924a]" : ""}`}>
            <span className={`mr-[3px] ml-[1px] flex h-4 w-4 items-center justify-center border ${t === selected ? "border-[#2b5f94] bg-[#7fbcec]" : "border-[#333] bg-white"}`}>
              {t === selected && <svg viewBox="0 0 12 12" className="h-3 w-3" fill="none" stroke="#1d5c96" strokeWidth="1.300"><path d="M.8 6.200l3.400 3.400L11.200 2" /></svg>}
            </span>
            {t}
          </div>
        ))}
      </div>
      <div className="flex w-[19px] flex-col items-center bg-[#f0f0f0] py-2">
        <svg viewBox="0 0 10 6" className="h-[6px] w-[10px] shrink-0" fill="none" stroke="#505050" strokeWidth="1.800"><path d="M.5 5.500L5 1l4.500 4.500" /></svg>
        <div className={`mt-[7px] w-full bg-[#cdcdcd] ${thumb}`} />
        <svg viewBox="0 0 10 6" className="mt-auto h-[6px] w-[10px] shrink-0" fill="none" stroke="#505050" strokeWidth="1.800"><path d="M.5.5L5 5 9.500.5" /></svg>
      </div>
    </div>
  );
}
const Zero = () => (
  <span className="flex h-[18px] w-[22px] shrink-0 items-center justify-center rounded-[50%] bg-[#008000] font-bold text-white">0</span>
);

const include = ["F.Cu", "B.Cu", "F.Adhesive", "B.Adhesive", "F.Paste", "B.Paste", "F.Silkscreen", "B.Silkscreen", "F.Mask", "B.Mask", "User.Drawings", "User.Comments", "User.Eco1", "User.Eco2"];
const all = ["B.Cu", "B.Mask", "B.Paste", "B.Silkscreen", "B.Adhesive", "B.Courtyard", "B.Fab", "F.Cu", "F.Mask", "F.Paste", "F.Silkscreen", "F.Adhesive", "F.Courtyard"];

function PlotDialog() {
  return (
    <div className="absolute top-[213px] left-[318px] h-[636px] w-[990px] bg-[#f0f0f0] shadow-[0_0_0_1px_rgba(60,25,40,0.8),0_3px_12px_rgba(0,0,0,0.45)]">
      <div className="flex h-[37px] items-center justify-between bg-white pr-[14px] pl-[9px]">
        <span>Plot</span>
        <svg viewBox="0 0 14 14" className="mb-[1px] h-[13px] w-[13px]" stroke="#000" strokeWidth="1.200"><path d="M.5.5l13 13M13.500.5l-13 13" /></svg>
      </div>
      <div className="mt-[10px] flex h-[28px] items-center pl-[10px]">
        <span className="w-[84px] tracking-[-0.15px]">Plot format:</span>
        <Combo className="w-[96px]">DXF</Combo>
        <span className="ml-[33px] w-[118px]">Output directory:</span>
        <div className="flex h-[28px] w-[578px] items-center border border-[#7a7a7a] bg-white pl-[6px]">Gerbers\</div>
        <Btn className="w-[27px]">
          <svg viewBox="0 0 14 14" className="h-[14px] w-[14px]" fill={G}><path d="M0 2q0-1.500 1.500-1.500H5L7 2.500h5.500Q14 2.500 14 4v8q0 1.500-1.500 1.500h-11Q0 13.500 0 12z" /></svg>
        </Btn>
        <Btn className="ml-[6px] w-[27px]">
          <svg viewBox="0 0 16 16" className="h-[16px] w-[16px]" fill="none" stroke={G} strokeWidth="2"><path d="M6 3H2v12h11v-4M9 1h6v6M15 1L6 10" /></svg>
        </Btn>
      </div>
      <div className="mt-[15px] flex h-[344px] pl-[10px]">
        <Group title="Include Layers" className="w-[191px]">
          <LayerList items={include} selected="F.Mask" className="mt-[6px] ml-[8px] h-[310px]" thumb="h-[118px]" />
        </Group>
        <Group title="Plot on All Layers" className="ml-[10px] w-[191px]">
          <LayerList items={all} className="mt-[6px] ml-[8px] h-[276px]" thumb="h-[95px]" />
          <div className="mt-[7px] flex gap-[4px] pl-[9px]">
            <Btn className="w-[27px]"><svg viewBox="0 0 14 14" className="h-[14px] w-[14px]" fill="none" stroke={G} strokeWidth="2"><path d="M7 14V1M2 6l5-5 5 5" /></svg></Btn>
            <Btn className="w-[27px]"><svg viewBox="0 0 14 14" className="h-[14px] w-[14px]" fill="none" stroke={G} strokeWidth="2"><path d="M7 0v13M2 8l5 5 5-5" /></svg></Btn>
          </div>
        </Group>
        <div className="ml-[10px] flex flex-col gap-[10px]">
          <Group title="General Options" className="h-[247px] w-[568px]">
            <div className="flex pl-[10px]">
              <div className="w-[310px] pt-[2px] tracking-[-0.1px]">
                <Check className="h-[31px]">Plot drawing sheet</Check>
                <Check className="h-[31px] tracking-[-0.26px]">Subtract soldermask from silkscreen</Check>
                <Check on className="h-[31px]">Indicate DNP on fabrication layers</Check>
                <Radio className="h-[23px]">Hide</Radio>
                <Radio on className="h-[39px]">Cross-out</Radio>
                <Check className="h-[31px] tracking-[-0.13px]">Sketch pads on fabrication layers</Check>
                <Check dim className="h-[24px] pl-[25px] tracking-[-0.25px]">Include pad numbers</Check>
              </div>
              <div className="flex flex-col gap-[3px] pt-[3px]">
                <div className="flex items-center"><span className="w-[80px]">Drill marks:</span><Combo className="w-[156px]">None</Combo></div>
                <div className="flex items-center"><span className="w-[80px]">Scaling:</span><Combo dim className="w-[156px]">1:1</Combo></div>
                <div className="flex items-center"><span className="w-[80px]">Plot mode:</span><Combo dim className="w-[156px]">Filled</Combo></div>
                <div className="-mt-px">
                  <Check className="h-[31px] tracking-[0.07px]">Use drill/place file origin</Check>
                  <Check dim className="h-[31px] tracking-[-0.15px]">Mirrored plot</Check>
                  <Check dim className="h-[31px] tracking-[0.1px]">Negative plot</Check>
                  <Check on className="h-[31px] tracking-[-0.03px]">Check zone fills before plotting</Check>
                </div>
              </div>
            </div>
          </Group>
          <Group title="DXF Options" className="h-[87px] w-[568px]">
            <div className="flex pl-[10px]">
              <div className="w-[333px] pt-[3px]">
                <Check on className="h-[30px] tracking-[-0.18px]">Plot graphic items using their contours</Check>
                <Check on dim className="h-[28px] tracking-[-0.04px]">Use KiCad font to plot text</Check>
              </div>
              <div className="flex h-[28px] items-center pt-[8px]">
                <span className="w-[87px]">Export units:</span>
                <Combo className="w-[106px]">Millimeters</Combo>
              </div>
            </div>
          </Group>
        </div>
      </div>
      <div className="mt-[11px] pl-[10px]">
        <Group title="Output Messages" className="h-[149px] w-[969px]">
          <div className="mt-[8px] ml-[10px] h-[78px] w-[948px] bg-white" />
          <div className="mt-[6px] flex h-[26px] items-center pl-[7px]">
            <span className="-mt-[2px] w-[47px]">Show:</span>
            <Check className="w-[87px] pt-px">All</Check>
            <Check on className="w-[72px] pt-px">Errors</Check>
            <Zero />
            <Check on className="ml-[35px] w-[96px] pt-px">Warnings</Check>
            <Zero />
            <Check on className="ml-[35px] w-[118px] pt-px">Actions</Check>
            <Check on className="w-[325px] pt-px">Infos</Check>
            <Btn className="w-[91px]">Save...</Btn>
          </div>
        </Group>
      </div>
      <div className="mt-[8px] flex items-center pl-[16px]">
        <Btn className="w-[94px]">Run DRC...</Btn>
        <span className="ml-[11px] w-[496px] pt-px tracking-[-0.15px]">(0 known DRC violations; 10 exclusions)</span>
        <Btn className="w-[91px]">Plot</Btn>
        <Btn className="ml-[10px] w-[91px]">Close</Btn>
        <Btn className="ml-[10px] w-[161px] tracking-[-0.18px]">Generate Drill Files...</Btn>
      </div>
      <svg viewBox="0 0 11 11" className="absolute right-[3px] bottom-[2px] h-[11px] w-[11px]" fill="#b8b8b8"><path d="M8 0h3v3H8zM8 4h3v3H8zM4 4h3v3H4zM0 8h3v3H0zM4 8h3v3H4zM8 8h3v3H8z" /></svg>
    </div>
  );
}

const Mark = ({ className }: { className: string }) => <div className={`absolute border-8 border-[#ed1c24] ${className}`} />;
const Num = ({ children, className }: P & { className: string }) => (
  <div className={`absolute text-[26px] leading-[20px] font-bold tracking-normal text-[#ed1c24] ${className}`}>{children}</div>
);

const MENU: [string, string][] = [
  ["File", "w-[37px]"], ["Edit", "w-[40px]"], ["View", "w-[46px]"], ["Place", "w-[49px]"], ["Route", "w-[53px]"],
  ["Inspect", "w-[61px]"], ["Tools", "w-[49px]"], ["Preferences", "w-[90px]"], ["Help", "w-[40px]"],
];

export default function App() {
  return (
    <div className="relative h-[900px] w-[1593px] overflow-hidden bg-[#f0f0f0] text-[14.5px] tracking-[-0.25px] whitespace-nowrap text-black [font-family:'Open_Sans','Noto_Sans',sans-serif]">
      <div className="flex h-[28px] items-center gap-[5px] bg-white pl-[2px] text-[#8c8c8c]">
        <Ico className="h-[20px] w-[20px]"><BoardTile /></Ico>
        <span className="pt-[2px] tracking-[-0.08px]">PCB — PCB Editor</span>
      </div>
      <div className="flex h-[24px] items-center bg-white pt-[3px] pl-[8px] text-[#6d6d6d]">
        {MENU.map(([t, w]) => <span key={t} className={w}>{t}</span>)}
      </div>
      <div className="flex h-[48px] items-center pl-[5px]">
        {TOP.map((I, i) => I ? <div key={i} className="flex w-[41px] shrink-0 justify-center"><I /></div> : <div key={i} className="flex w-[9px] shrink-0 justify-center pr-px"><div className="h-[34px] w-px bg-[#8c8c8c]" /></div>)}
      </div>
      <div className="flex h-[43px] items-center border-b border-[#a0a0a0] pb-[2px] pl-[6px]">
        <Combo className="w-[220px] tracking-[-0.18px]">Track: use netclass width</Combo>
        <div className="ml-[3px] flex h-[38px] w-[38px] shrink-0 items-center justify-center border border-[#0078d7] bg-[#b3d6f5]">
          <Ico><path d="M2 1v18q0 7 7 7h12q7 0 7-7V1" strokeWidth="3" /><path d="M9 11h12M9 16h12" strokeWidth="1.300" /><circle cx="15" cy="26" r="3.800" fill="#1a81c4" stroke="none" /></Ico>
        </div>
        <div className="mx-[5px] h-[34px] w-px shrink-0 bg-[#8c8c8c]" />
        <Combo className="ml-[1px] w-[320px]">Via: use netclass sizes</Combo>
        <div className="mr-[6px] ml-[5px] h-[34px] w-px shrink-0 bg-[#8c8c8c]" />
        <div className="-mt-[2px] flex h-[26px] w-[159px] shrink-0 items-center border border-[#7a7a7a] bg-white pr-[5px] pl-[7px]">
          <span className="mr-[6px] h-[14px] w-[14px] border border-black bg-[#c83434]" />
          <span className="grow pt-px">F.Cu (PgUp)</span>
          <Chevron />
        </div>
        <svg viewBox="0 0 30 30" className="ml-[7px] h-[30px] w-[30px] shrink-0"><path d="M0 0h30v30H0z" fill="#4d7fc4" /><path d="M0 0h23L9 30H0z" fill="#c83434" /><path d="M23 0L9 30" stroke="#eee" strokeWidth="3" /><path d="M23 0L9 30" stroke="#222" strokeWidth="1.300" strokeDasharray="3 1.500" /></svg>
        <div className="mr-[6px] ml-[9px] h-[34px] w-px shrink-0 bg-[#8c8c8c]" />
        <Combo className="w-[209px]">0.0100 mm (0.39 mils)</Combo>
        <div className="mx-[5px] h-[34px] w-px shrink-0 bg-[#8c8c8c]" />
        <Combo className="ml-[1px] w-[119px]">Zoom 3.50</Combo>
      </div>
      <div className="flex h-[757px]">
        <div className="flex w-[45px] shrink-0 flex-col border-r border-[#a0a0a0] pt-[3px] pl-[2px]">
          {LEFT.map((e, i) => {
            if (!e) return <div key={i} className="flex h-[9px] w-[40px] shrink-0 items-center justify-center"><div className="h-px w-[34px] bg-[#8c8c8c]" /></div>;
            const [I, on] = e;
            return (
              <div key={i} className="flex h-[41px] w-[40px] shrink-0 items-center justify-center">
                <div className={`flex h-[38px] w-[38px] items-center justify-center ${on ? "border border-[#0078d7] bg-[#b3d6f5]" : ""}`}><I /></div>
              </div>
            );
          })}
        </div>
        <Board />
      </div>
      <PlotDialog />
      <Mark className="top-[49px] left-[180px] h-[54px] w-[57px]" />
      <Mark className="top-[247px] left-[314px] h-[56px] w-[208px]" />
      <Mark className="top-[495px] left-[326px] h-[46px] w-[178px]" />
      <Mark className="top-[571px] left-[1054px] h-[58px] w-[228px]" />
      <Mark className="top-[794px] left-[908px] h-[64px] w-[133px]" />
      <Num className="top-[25px] left-[170px]">1</Num>
      <Num className="top-[221px] left-[370px]">2</Num>
      <Num className="top-[474px] left-[501px]">3</Num>
      <Num className="top-[631px] left-[1037px]">4</Num>
      <Num className="top-[772px] left-[1041px]">5</Num>
    </div>
  );
}
